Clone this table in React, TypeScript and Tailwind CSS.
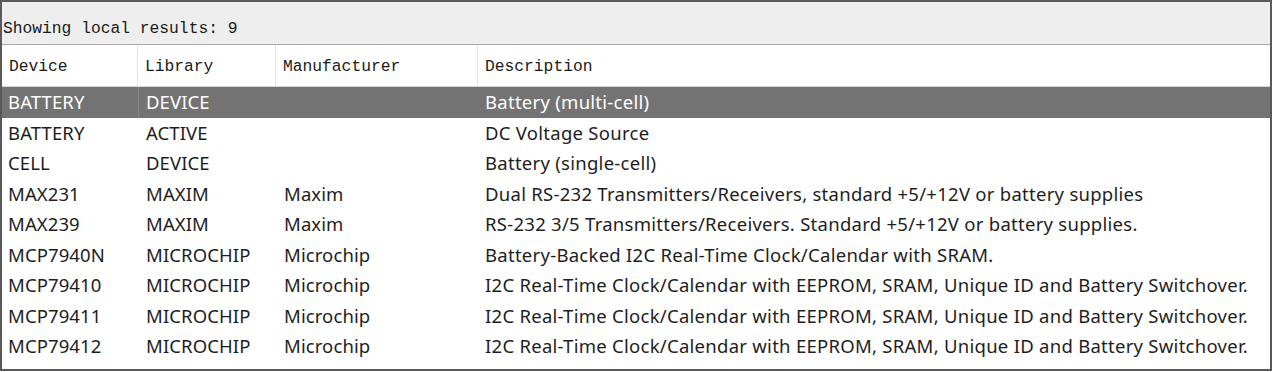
const rows = [
  { device: "BATTERY", library: "DEVICE", manufacturer: "", description: "Battery (multi-cell)" },
  { device: "BATTERY", library: "ACTIVE", manufacturer: "", description: "DC Voltage Source" },
  { device: "CELL", library: "DEVICE", manufacturer: "", description: "Battery (single-cell)" },
  { device: "MAX231", library: "MAXIM", manufacturer: "Maxim", description: "Dual RS-232 Transmitters/Receivers, standard +5/+12V or battery supplies" },
  { device: "MAX239", library: "MAXIM", manufacturer: "Maxim", description: "RS-232 3/5 Transmitters/Receivers. Standard +5/+12V or battery supplies." },
  { device: "MCP7940N", library: "MICROCHIP", manufacturer: "Microchip", description: "Battery-Backed I2C Real-Time Clock/Calendar with SRAM." },
  { device: "MCP79410", library: "MICROCHIP", manufacturer: "Microchip", description: "I2C Real-Time Clock/Calendar with EEPROM, SRAM, Unique ID and Battery Switchover." },
  { device: "MCP79411", library: "MICROCHIP", manufacturer: "Microchip", description: "I2C Real-Time Clock/Calendar with EEPROM, SRAM, Unique ID and Battery Switchover." },
  { device: "MCP79412", library: "MICROCHIP", manufacturer: "Microchip", description: "I2C Real-Time Clock/Calendar with EEPROM, SRAM, Unique ID and Battery Switchover." },
];

const mono = "font-['Liberation_Mono','DejaVu_Sans_Mono',monospace]";
const sans = "font-['Noto_Sans','Open_Sans',sans-serif]";

export default function App() {
  return (
    <div className="w-[1274px] h-[372px] bg-white">
      <div className="w-[1272px] h-[371px] border-2 border-[#5a5a5a] flex flex-col">
        {/* status bar */}
        <div className={`h-[43px] bg-[#eeeeee] border-b border-[#a8a8a8] flex items-center pt-[12px] pl-[1px] ${mono} text-[16.3px] text-[#1a1a1a]`}>
          Showing local results: 9
        </div>

        {/* header */}
        <div className={`h-[42px] bg-white flex items-center ${mono} text-[16.3px] text-[#1a1a1a] border-b border-[#d8d8d8]`}>
          <div className="w-[136px] pl-[7px] pt-[3px] h-full flex items-center border-r border-[#e4e4e4]">Device</div>
          <div className="w-[138px] pl-[7px] pt-[3px] h-full flex items-center border-r border-[#e4e4e4]">Library</div>
          <div className="w-[202px] pl-[7px] pt-[3px] h-full flex items-center border-r border-[#e4e4e4]">Manufacturer</div>
          <div className="flex-1 pl-[7px] pt-[3px] h-full flex items-center">Description</div>
        </div>

        {/* rows */}
        <div className={`flex flex-col ${sans} text-[18.5px] tracking-[0.1px]`}>
          {rows.map((r, i) => {
            const selected = i === 0;
            return (
              <div
                key={i}
                className={`h-[30.5px] flex items-center whitespace-nowrap ${
                  selected ? "bg-[#737373] text-white" : "text-[#1e1e1e]"
                }`}
              >
                <div className={`w-[137px] pl-[6px] h-full flex items-center ${selected ? "border-r border-[#888888]" : ""}`}>
                  {r.device}
                </div>
                <div className="w-[138px] pl-[7px] h-full flex items-center">{r.library}</div>
                <div className="w-[202px] pl-[7px] h-full flex items-center">{r.manufacturer}</div>
                <div className="flex-1 pl-[6px] h-full flex items-center tracking-[0.27px]">{r.description}</div>
              </div>
            );
          })}
        </div>
      </div>
    </div>
  );
}
